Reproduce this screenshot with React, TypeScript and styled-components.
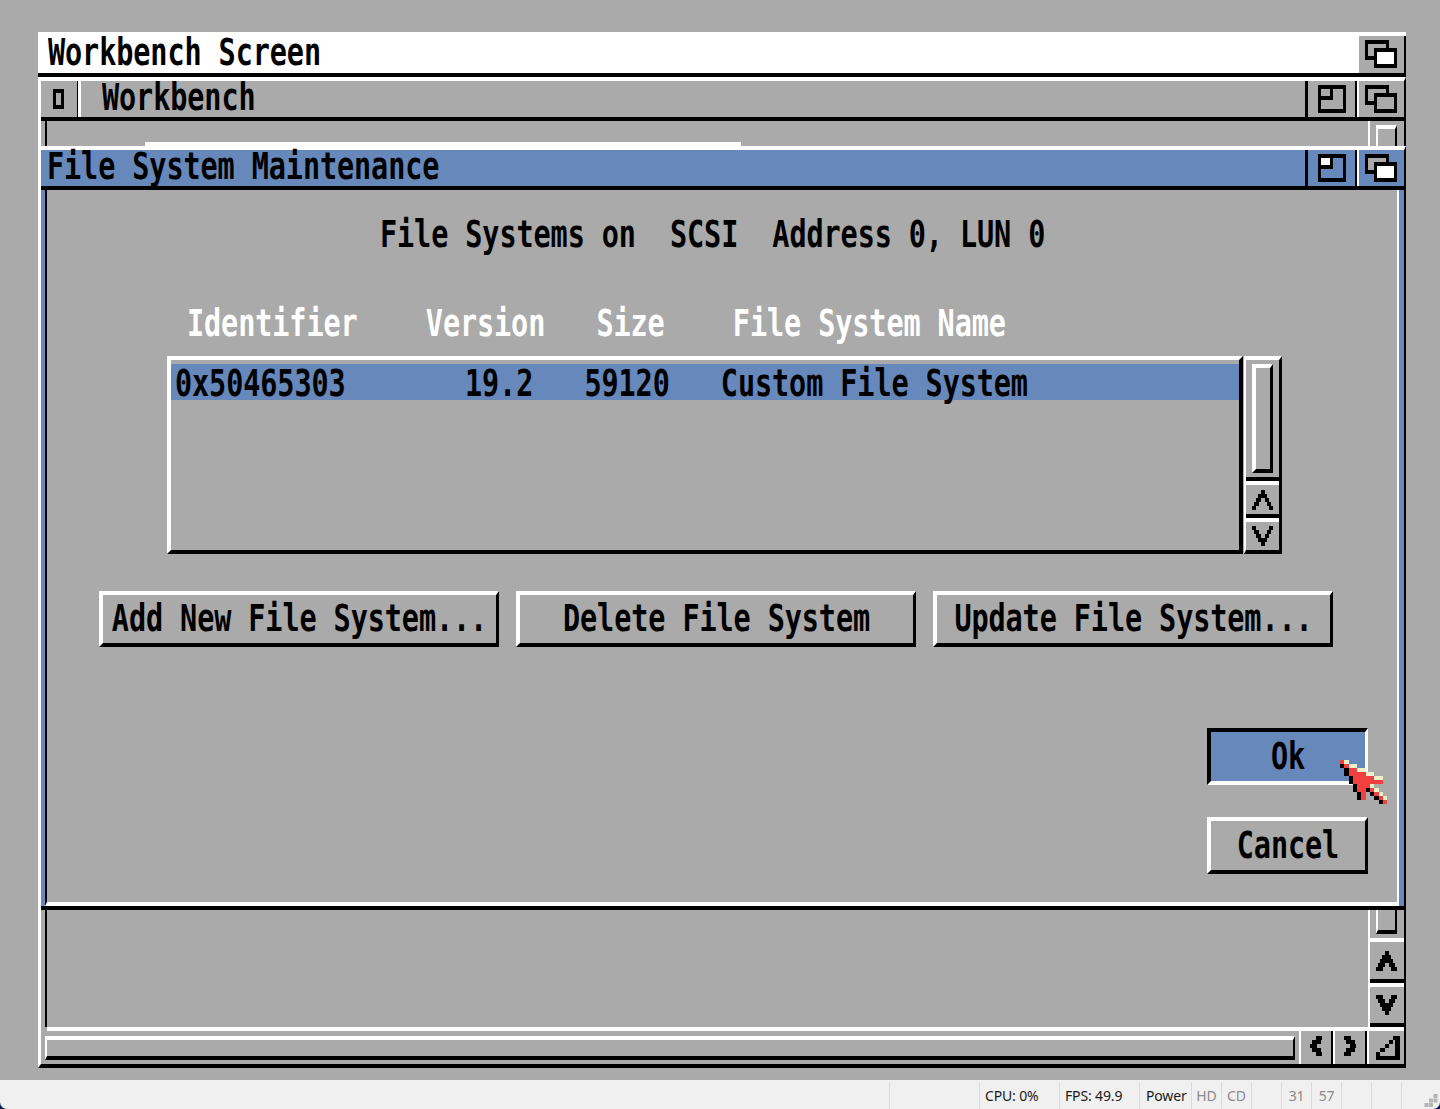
import React from "react";
import styled, { createGlobalStyle } from "styled-components";

const GRAY = "#aaaaaa";
const BLUE = "#6688bb";

const Global = createGlobalStyle`
  html, body { margin: 0; padding: 0; background: ${GRAY}; }
  * { box-sizing: border-box; }
`;

const Page = styled.div`
  width: 1440px;
  height: 1109px;
  overflow: hidden;
  background: #0c1f4a;
  display: flex;
  flex-direction: column;
`;
const Desk = styled.div`
  height: 1080px;
  background: ${GRAY};
  padding: 32px 34px 0 38px;
`;
const Screen = styled.div`
  position: relative;
  width: 1368px;
  height: 1036px;
  display: flex;
  flex-direction: column;
`;
const Topaz = styled.span<{ $light?: boolean }>`
  display: inline-block;
  font-family: "DejaVu Sans Mono", "Liberation Mono", monospace;
  font-weight: 700;
  font-size: 28.5px;
  letter-spacing: -0.1px;
  line-height: 36px;
  height: 36px;
  white-space: pre;
  color: ${(p) => (p.$light ? "#fff" : "#000")};
  transform: scaleY(1.3);
  transform-origin: 50% 50%;
`;
const ScreenBar = styled.div`
  display: flex;
  flex: none;
  height: 45px;
  background: #fff;
  border-bottom: 4px solid #000;
`;
const ScreenTitle = styled.div`
  flex: 1;
  padding: 3px 0 0 10px;
`;
const ScreenDepth = styled.div`
  width: 47px;
  margin-top: 4px;
  padding: 4px 0 0 6px;
  background: ${GRAY};
  border-right: 2px solid #000;
`;
const Workbench = styled.div`
  position: relative;
  flex: 1;
  display: flex;
  flex-direction: column;
  background: ${GRAY};
  border-top: 4px solid #fff;
  border-left: 3px solid #fff;
  border-right: 2px solid #000;
  border-bottom: 4px solid #000;
`;
const TitleBar = styled.div<{ $active?: boolean }>`
  display: flex;
  flex: none;
  height: 40px;
  background: ${(p) => (p.$active ? BLUE : GRAY)};
  border-bottom: 4px solid #000;
`;
const CloseGadget = styled.div`
  width: 40px;
  display: flex;
  padding: 8px 0 0 12px;
  border-right: 3px solid #fff;
  box-shadow: inset -1px 0 0 #000;
`;
const WindowTitle = styled.div<{ $inset: number }>`
  flex: 1;
  margin-top: -1px;
  padding-left: ${(p) => p.$inset}px;
`;
const ZoomGadget = styled.div`
  width: 50px;
  padding: 4px 0 0 10px;
  border-left: 3px solid #000;
`;
const DepthGadget = styled.div`
  width: 49px;
  padding: 4px 0 0 8px;
  border-left: 2px solid #000;
  box-shadow: inset 2px 0 0 #fff;
`;
const WorkArea = styled.div`
  flex: 1;
  display: flex;
  min-height: 0;
`;
const Canvas = styled.div`
  flex: 1;
  margin-left: 4px;
  border-left: 2px solid #000;
`;
const VBar = styled.div`
  width: 36px;
  display: flex;
  flex-direction: column;
  border-left: 2px solid #fff;
`;
const VTrack = styled.div`
  flex: 1;
  padding: 4px 7px 4px 6px;
`;
const VKnob = styled.div`
  height: 100%;
  border-top: 4px solid #fff;
  border-left: 2px solid #fff;
  border-right: 2px solid #000;
  border-bottom: 4px solid #000;
`;
const VArrow = styled.div<{ $h: number }>`
  flex: none;
  height: ${(p) => p.$h}px;
  display: flex;
  align-items: center;
  padding-left: 6px;
  border-top: 4px solid #fff;
  border-bottom: 4px solid #000;
`;
const BottomBar = styled.div`
  flex: none;
  height: 37px;
  display: flex;
  padding: 4px 0 0 4px;
  background: linear-gradient(#fff, #fff) 6px 0 / 100% 4px no-repeat;
`;
const HTrack = styled.div`
  flex: 1;
  padding: 5px 4px 4px 0;
`;
const HKnob = styled.div`
  height: 100%;
  border-top: 4px solid #fff;
  border-left: 2px solid #fff;
  border-right: 2px solid #000;
  border-bottom: 4px solid #000;
`;
const HArrow = styled.div<{ $w: number }>`
  width: ${(p) => p.$w}px;
  flex: none;
  display: flex;
  align-items: center;
  justify-content: center;
  padding-bottom: 4px;
  border-left: 2px solid #fff;
  border-right: 2px solid #000;
`;
const SizeGadget = styled.div`
  width: 37px;
  flex: none;
  padding: 5px 0 0 7px;
  border-left: 2px solid #fff;
`;

const Dialog = styled.div`
  position: absolute;
  top: 65px;
  left: 0;
  right: -2px;
  height: 764px;
  display: flex;
  flex-direction: column;
  background: ${BLUE};
  border-top: 4px solid #fff;
  border-right: 2px solid #000;
  border-bottom: 4px solid #000;
`;
const Sliver = styled.div`
  position: absolute;
  top: -8px;
  left: 104px;
  width: 596px;
  height: 4px;
  background: #fff;
`;
const DialogBody = styled.div`
  flex: 1;
  display: flex;
  flex-direction: column;
  margin: 0 5px 0 4px;
  padding-top: 27px;
  background: ${GRAY};
  border-left: 2px solid #000;
  border-right: 2px solid #fff;
  border-bottom: 4px solid #fff;
`;
const Heading = styled.div`
  padding-left: 333px;
  height: 36px;
`;
const Columns = styled.div`
  margin-top: 53px;
  padding-left: 140px;
  height: 36px;
`;
const ListArea = styled.div`
  display: flex;
  margin: 14px 0 0 120px;
  height: 198px;
`;
const ListBox = styled.div`
  width: 1076px;
  padding-top: 4px;
  border-top: 4px solid #fff;
  border-left: 4px solid #fff;
  border-right: 4px solid #000;
  border-bottom: 4px solid #000;
`;
const ListRow = styled.div`
  height: 36px;
  padding: 2px 0 0 4px;
  background: ${BLUE};
`;
const ListScroll = styled.div`
  width: 38px;
  margin-left: 1px;
  display: flex;
  flex-direction: column;
  border-top: 4px solid #fff;
  border-left: 2px solid #fff;
  border-right: 3px solid #000;
  border-bottom: 4px solid #000;
`;
const ListTrack = styled.div`
  height: 121px;
  flex: none;
  padding: 4px 6px 0 6px;
  border-bottom: 4px solid #000;
`;
const ListKnob = styled.div`
  width: 21px;
  height: 109px;
  border-top: 4px solid #fff;
  border-left: 4px solid #fff;
  border-right: 3px solid #000;
  border-bottom: 4px solid #000;
`;
const ListArrow = styled.div<{ $h: number; $sep?: boolean }>`
  flex: none;
  height: ${(p) => p.$h}px;
  display: flex;
  align-items: center;
  padding-left: 6px;
  border-top: 4px solid #fff;
  border-bottom: ${(p) => (p.$sep ? "4px solid #000" : "0")};
`;
const ButtonRow = styled.div`
  display: flex;
  gap: 17px;
  margin-top: 37px;
  padding-left: 52px;
`;
const Button = styled.div<{ $w: number; $h: number; $pressed?: boolean }>`
  width: ${(p) => p.$w}px;
  height: ${(p) => p.$h}px;
  display: flex;
  align-items: center;
  justify-content: center;
  background: ${(p) => (p.$pressed ? BLUE : "transparent")};
  border-top: 4px solid ${(p) => (p.$pressed ? "#000" : "#fff")};
  border-left: 4px solid ${(p) => (p.$pressed ? "#000" : "#fff")};
  border-bottom: 4px solid ${(p) => (p.$pressed ? "#fff" : "#000")};
  border-right: 3px solid ${(p) => (p.$pressed ? "#fff" : "#000")};
`;
const Actions = styled.div`
  display: flex;
  flex-direction: column;
  align-items: flex-end;
  gap: 32px;
  margin: 81px 29px 0 0;
`;
const Pointer = styled.div`
  position: absolute;
  left: 1302px;
  top: 728px;
  line-height: 0;
`;

const StatusBar = styled.div`
  position: relative;
  height: 29px;
  display: flex;
  background: #f0f0f0;
  border-radius: 0 0 7px 7px;
  font-family: "Noto Sans", "Open Sans", sans-serif;
  font-size: 14px;
  letter-spacing: -0.15px;
  padding-top: 2px;
`;
const Cell = styled.div<{ $w?: number; $dim?: boolean; $center?: boolean; $pad?: number }>`
  ${(p) => (p.$w ? `width: ${p.$w}px; flex: none;` : "flex: 1;")}
  height: 27px;
  line-height: 27px;
  white-space: nowrap;
  padding-left: ${(p) => p.$pad ?? 0}px;
  text-align: ${(p) => (p.$center ? "center" : "left")};
  color: ${(p) => (p.$dim ? "#8a8a8a" : "#1a1a1a")};
  border-right: 1px solid #dadada;
`;
const Grip = styled.svg`
  position: absolute;
  right: 2px;
  bottom: 1px;
`;

const Pixels = ({
  rows,
  w,
  h,
  palette = { X: "#000" },
}: {
  rows: string[];
  w: number;
  h: number;
  palette?: Record<string, string>;
}) => (
  <svg
    width={rows[0].length * w}
    height={rows.length * h}
    viewBox={`0 0 ${rows[0].length * w} ${rows.length * h}`}
    shapeRendering="crispEdges"
    style={{ display: "block" }}
  >
    {rows.flatMap((row, y) =>
      row.split("").map((c, x) =>
        palette[c] ? (
          <rect key={`${x}-${y}`} x={x * w} y={y * h} width={w + 0.1} height={h} fill={palette[c]} />
        ) : null
      )
    )}
  </svg>
);

const DepthIcon = ({ front }: { front: string }) => (
  <svg width="32" height="28" viewBox="0 0 32 28" shapeRendering="crispEdges" style={{ display: "block" }}>
    <rect x="0" y="0" width="24" height="20" fill="#000" />
    <rect x="3" y="4" width="18" height="12" fill={GRAY} />
    <rect x="9" y="8" width="23" height="20" fill="#000" />
    <rect x="12" y="12" width="17" height="12" fill={front} />
  </svg>
);

const ZoomIcon = ({ small, fill }: { small: string; fill: string }) => (
  <svg width="28" height="28" viewBox="0 0 28 28" shapeRendering="crispEdges" style={{ display: "block" }}>
    <rect width="28" height="28" fill="#000" />
    <rect x="3" y="4" width="22" height="20" fill={fill} />
    <rect x="0" y="0" width="15" height="15" fill="#000" />
    <rect x="3" y="4" width="9" height="7" fill={small} />
  </svg>
);

const CloseIcon = () => (
  <svg width="11" height="20" viewBox="0 0 11 20" shapeRendering="crispEdges" style={{ display: "block" }}>
    <rect width="11" height="20" fill="#000" />
    <rect x="3" y="4" width="5" height="12" fill={GRAY} />
  </svg>
);

const thinUp = ["....XX....", "...XXXX...", "..XX..XX..", ".XX....XX.", "XX......XX"];
const boldUp = ["....XX....", "...XXXX...", "..XXXXXX..", ".XXX..XXX.", "XXX....XXX"];
const left = ["...XXX", ".XXXX.", "XXX...", ".XXXX.", "...XXX"];
const right = ["XXX...", ".XXXX.", "...XXX", ".XXXX.", "XXX..."];
const size = [
  "........XXX",
  "......XX.XX",
  "....XX...XX",
  "..XX.....XX",
  "XX.......XX",
  "XXXXXXXXXXX",
];
const pointer = [
  "rc.........",
  "krcc.......",
  ".krrcc.....",
  ".krrrrcc...",
  "..krrrrrcc.",
  "..krrrrrrr.",
  "...krrrc...",
  "...krrkrc..",
  "....kr.krc.",
  "....kr..krc",
  ".........kr",
];
const pointerPalette = { r: "#f04040", c: "#f0f0c8", k: "#000" };

const down = (r: string[]) => [...r].reverse();

export default function App() {
  return (
    <Page>
      <Global />
      <Desk>
        <Screen>
          <ScreenBar>
            <ScreenTitle>
              <Topaz>Workbench Screen</Topaz>
            </ScreenTitle>
            <ScreenDepth>
              <DepthIcon front="#fff" />
            </ScreenDepth>
          </ScreenBar>
          <Workbench>
            <TitleBar>
              <CloseGadget>
                <CloseIcon />
              </CloseGadget>
              <WindowTitle $inset={21}>
                <Topaz>Workbench</Topaz>
              </WindowTitle>
              <ZoomGadget>
                <ZoomIcon small={GRAY} fill={GRAY} />
              </ZoomGadget>
              <DepthGadget>
                <DepthIcon front={GRAY} />
              </DepthGadget>
            </TitleBar>
            <WorkArea>
              <Canvas />
              <VBar>
                <VTrack>
                  <VKnob />
                </VTrack>
                <VArrow $h={45}>
                  <Pixels rows={boldUp} w={2.14} h={4} />
                </VArrow>
                <VArrow $h={44}>
                  <Pixels rows={down(boldUp)} w={2.14} h={4} />
                </VArrow>
              </VBar>
            </WorkArea>
            <BottomBar>
              <HTrack>
                <HKnob />
              </HTrack>
              <HArrow $w={34}>
                <Pixels rows={left} w={2.14} h={4} />
              </HArrow>
              <HArrow $w={34}>
                <Pixels rows={right} w={2.14} h={4} />
              </HArrow>
              <SizeGadget>
                <Pixels rows={size} w={2.14} h={4} />
              </SizeGadget>
            </BottomBar>
            <Dialog>
              <Sliver />
              <TitleBar $active>
                <WindowTitle $inset={6}>
                  <Topaz>File System Maintenance</Topaz>
                </WindowTitle>
                <ZoomGadget>
                  <ZoomIcon small="#fff" fill={BLUE} />
                </ZoomGadget>
                <DepthGadget>
                  <DepthIcon front="#fff" />
                </DepthGadget>
              </TitleBar>
              <DialogBody>
                <Heading>
                  <Topaz>File Systems on  SCSI  Address 0, LUN 0</Topaz>
                </Heading>
                <Columns>
                  <Topaz $light>Identifier    Version   Size    File System Name</Topaz>
                </Columns>
                <ListArea>
                  <ListBox>
                    <ListRow>
                      <Topaz>0x50465303       19.2   59120   Custom File System</Topaz>
                    </ListRow>
                  </ListBox>
                  <ListScroll>
                    <ListTrack>
                      <ListKnob />
                    </ListTrack>
                    <ListArrow $h={37} $sep>
                      <Pixels rows={thinUp} w={2.14} h={4} />
                    </ListArrow>
                    <ListArrow $h={32}>
                      <Pixels rows={down(thinUp)} w={2.14} h={4} />
                    </ListArrow>
                  </ListScroll>
                </ListArea>
                <ButtonRow>
                  <Button $w={400} $h={56}>
                    <Topaz>Add New File System...</Topaz>
                  </Button>
                  <Button $w={400} $h={56}>
                    <Topaz>Delete File System</Topaz>
                  </Button>
                  <Button $w={400} $h={56}>
                    <Topaz>Update File System...</Topaz>
                  </Button>
                </ButtonRow>
                <Actions>
                  <Button $w={161} $h={57} $pressed>
                    <Topaz>Ok</Topaz>
                  </Button>
                  <Button $w={161} $h={57}>
                    <Topaz>Cancel</Topaz>
                  </Button>
                </Actions>
              </DialogBody>
            </Dialog>
          </Workbench>
          <Pointer>
            <Pixels rows={pointer} w={4.28} h={4} palette={pointerPalette} />
          </Pointer>
        </Screen>
      </Desk>
      <StatusBar>
        <Cell $w={890} />
        <Cell $w={90} />
        <Cell $w={80} $pad={5}>CPU: 0%</Cell>
        <Cell $w={80} $pad={5}>FPS: 49.9</Cell>
        <Cell $w={52} $pad={6}>Power</Cell>
        <Cell $w={30} $dim $center>HD</Cell>
        <Cell $w={30} $dim $center>CD</Cell>
        <Cell $w={30} />
        <Cell $w={30} $dim $center>31</Cell>
        <Cell $w={30} $dim $center>57</Cell>
        <Cell $w={30} />
        <Cell $w={30} />
        <Grip width="14" height="14" viewBox="0 0 14 14">
          <g fill="#b4b4b4">
            <rect x="9.5" y="0" width="4" height="4" />
            <rect x="5" y="4.5" width="4" height="4" />
            <rect x="9.5" y="4.5" width="4" height="4" />
            <rect x="0.5" y="9" width="4" height="4" />
            <rect x="5" y="9" width="4" height="4" />
          </g>
        </Grip>
      </StatusBar>
    </Page>
  );
}
